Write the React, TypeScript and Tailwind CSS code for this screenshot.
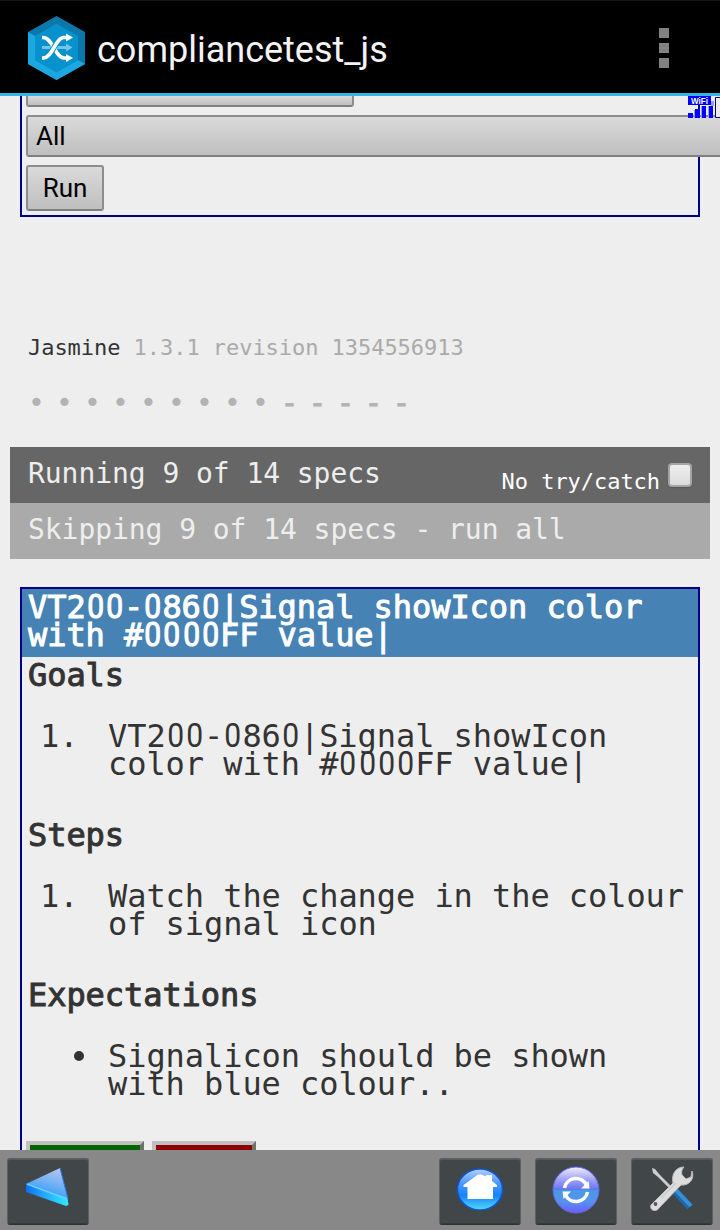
import React from "react";

function Mono({ text }: { text: string }) {
  return (
    <>
      {text.split(/(0)/).map((part, i) =>
        part === "0" ? (
          <span key={i} className="inline-block h-[28px] w-[19.2px] origin-[50%_75%] scale-x-[0.94] scale-y-[1.03] text-center font-['Roboto'] leading-[28px] tracking-normal">0</span>
        ) : (
          part
        )
      )}
    </>
  );
}

function Heading({ children }: { children: string }) {
  return (
    <h3 className="px-[6px] leading-[28px] [-webkit-text-stroke:1px_#333]">
      <Mono text={children} />
    </h3>
  );
}

function Item({ marker, lines }: { marker: string; lines: string[] }) {
  return (
    <div className="mt-[33px] mb-[43px] flex h-[56px]">
      {marker === "•" ? (
        <div className="w-[86px] pl-[52px] pt-[9px]">
          <div className="size-[10px] rounded-full bg-[#333]" />
        </div>
      ) : (
        <div className="w-[86px] pl-[18px]">{marker}</div>
      )}
      <div className="whitespace-pre">
        {lines.map((l) => (
          <div key={l} className="h-[28px]"><Mono text={l} /></div>
        ))}
      </div>
    </div>
  );
}

function Tile({ children }: { children: React.ReactNode }) {
  return (
    <button className="flex h-[67px] w-[82px] items-start justify-center rounded-[3px] border border-[#5c6062] border-b-[#2f3335] bg-[#414649] shadow-[inset_0_1px_0_#53585a,inset_0_-1px_0_#35393b]">
      {children}
    </button>
  );
}

const control = "border-2 border-[#8d8d8d] border-b-[#7f7f7f] rounded-[3px] bg-linear-to-b from-[#dadada] to-[#bfbfbf] text-black font-['Roboto']";

export default function App() {
  return (
    <div className="flex h-[1230px] w-[720px] flex-col overflow-hidden bg-[#eee] font-['Droid_Sans_Mono','DejaVu_Sans_Mono',monospace] text-[#333]">
      <header className="flex h-[96px] shrink-0 items-center border-t border-b-[3px] border-t-[#141414] border-b-[#33b5e5] bg-black pl-[28px]">
        <svg className="mt-[2px] h-[64px] w-[57px]" viewBox="0 0 57 64">
          <path d="M28.500 0 57 16v32L28.500 64 0 48V16Z" fill="#0a78aa" />
          <path d="M0 16v32l28.500 16L57 48l-7-4-21.500 12L7 44V20Z" fill="#1ba8e2" />
          <path d="M28.500 7.500 50 20v24L28.500 56.500 7 44V20Z" fill="#0791cd" />
          <path d="M14 31.500h24" stroke="#73c4e6" strokeWidth="3" />
          <path d="m38 27.500 6.500 4-6.500 4Z" fill="#73c4e6" />
          <path d="M14 21.500h1c10 0 12 20.500 21 20.500h3" fill="none" stroke="#fff" strokeWidth="3.600" />
          <path d="M14 42h1c10 0 12-20.500 21-20.500h3" fill="none" stroke="#0791cd" strokeWidth="5.500" />
          <path d="M14 42h1c10 0 12-20.500 21-20.500h3" fill="none" stroke="#fff" strokeWidth="3.600" />
          <path d="m38 17.500 7 4-7 4Zm0 20.500 7 4-7 4Z" fill="#fff" />
        </svg>
        <h1 className="ml-[12px] mt-[6px] font-['Roboto'] text-[36px] text-[#f3f3f3]">compliancetest_js</h1>
        <div className="ml-auto mr-[51px] mt-[2px] flex flex-col gap-[5px]">
          <i className="size-[10px] bg-[#828282]" />
          <i className="size-[10px] bg-[#828282]" />
          <i className="size-[10px] bg-[#828282]" />
        </div>
      </header>

      <main className="relative h-[1054px] shrink-0 overflow-hidden">
        <section className="mx-[20px] h-[121px] border-2 border-t-0 border-[#00008b] pl-[4px]">
          <div className={`${control} h-[11px] w-[328px] rounded-t-none border-t-0 from-[#c4c4c4]`} />
          <div className={`${control} relative mt-[8px] h-[42px] w-[720px] pl-[8px] text-[26px] leading-[38px]`}>All</div>
          <button className={`${control} mt-[8px] block h-[46px] w-[78px] text-[26px] leading-[42px]`}>Run</button>
        </section>
        <svg className="absolute left-[688px] top-0 h-[22px] w-[32px]" viewBox="0 0 32 22">
          <path d="M6 14h2v8H6Zm7-4h2v12h-2Zm7 0h2v12h-2Zm3-5h3v5h-3Z" fill="#99f" />
          <path d="M0 0h23v9H0ZM0 17h5v5H0Zm7-4h5v9H7Zm7-3h4v12h-4Zm7 0h4v12h-4Z" fill="#00f" />
          <path d="M27.500 1.500h7v20h-7Z" fill="#eee" stroke="#00008b" />
          <text x="3" y="7.500" fill="#fff" fontSize="9" fontWeight="bold" fontFamily="Liberation Sans" textLength="17" lengthAdjust="spacingAndGlyphs">WiFi</text>
        </svg>

        <p className="mt-[116px] ml-[28px] text-[22px] leading-[30px] tracking-[-0.045px] text-[#aaa]">
          <span className="text-[#333]">Jasmine </span>1.3.1 revision 1354556913
        </p>
        <div className="mt-[26px] ml-[28px] flex h-[28px] text-[28px] leading-[28px] text-[#b3b3b3]">
          {"•••••••••-----".split("").map((c, i) => (
            <span key={i} className={c === "-" ? "w-[28px] pl-px pt-px [-webkit-text-stroke:1.2px_#b3b3b3]" : "w-[28px]"}>{c}</span>
          ))}
        </div>

        <div className="mx-[10px] mt-[30px] flex h-[56px] bg-[#666] pl-[18px] pr-[18px] text-[28px] leading-[54px] tracking-[-0.056px] text-[#eee]">
          <span>Running 9 of 14 specs</span>
          <label className="ml-auto flex text-[22px] leading-[69px] tracking-[-0.045px] text-white">
            No try/catch
            <span className="ml-[8px] mt-[16px] size-[24px] rounded-[4px] border-2 border-[#a5a5a5] bg-linear-to-b from-[#eee] to-[#dcdcdc] shadow-[0_1px_1px_#555]" />
          </label>
        </div>
        <div className="mx-[10px] h-[56px] bg-[#aaa] pl-[18px] text-[28px] leading-[54px] tracking-[-0.056px] text-[#eee]">
          Skipping 9 of 14 specs - run all
        </div>

        <section className="mx-[20px] mt-[28px] h-[640px] border-2 border-[#00008b] text-[32px] leading-[28px] tracking-[-0.065px]">
          <h2 className="mb-[4px] h-[68px] whitespace-pre bg-[#4682b4] px-[6px] pt-[4px] text-white [-webkit-text-stroke:1px_white]">
            <div className="h-[28px]"><Mono text="VT200-0860|Signal showIcon color" /></div>
            <div className="h-[28px]"><Mono text="with #0000FF value|" /></div>
          </h2>
          <Heading>Goals</Heading>
          <Item marker="1." lines={["VT200-0860|Signal showIcon", "color with #0000FF value|"]} />
          <Heading>Steps</Heading>
          <Item marker="1." lines={["Watch the change in the colour", "of signal icon"]} />
          <Heading>Expectations</Heading>
          <Item marker="•" lines={["Signalicon should be shown", "with blue colour.."]} />
          <div className="flex gap-[8px] pl-[4px]">
            <div className="h-[40px] w-[118px] border-4 border-[#c0c0c0] border-r-[#707070] bg-[#006400]" />
            <div className="h-[40px] w-[104px] border-4 border-[#c0c0c0] border-r-[#707070] bg-[#8b0000]" />
          </div>
        </section>
      </main>

      <nav className="flex h-[80px] shrink-0 gap-[14px] bg-[#888] px-[7px] pt-[8px]">
        <Tile>
          <svg className="mt-[7px] h-[46px] w-[50px]" viewBox="0 0 50 46">
            <defs>
              <linearGradient id="arrow" x1=".8" y1="0" x2=".4" y2="1">
                <stop stopColor="#b9c6f3" /><stop offset=".55" stopColor="#69aef5" /><stop offset="1" stopColor="#1c9dfa" />
              </linearGradient>
              <linearGradient id="edge"><stop stopColor="#0872ef" /><stop offset=".45" stopColor="#27aafb" /><stop offset="1" stopColor="#2cecff" /></linearGradient>
            </defs>
            <path d="M3 18 37 2l8 31Z" fill="url(#arrow)" />
            <path d="M3 17 44.500 32l1 7-2.500 1L3 26Z" fill="url(#edge)" />
            <path d="m4 18 40 15" stroke="#71cbff" strokeWidth="1.500" />
            <path d="m37 2 8 31" stroke="#277cf0" strokeWidth="1" />
          </svg>
        </Tile>
        <div className="ml-auto flex gap-[14px]">
          <Tile>
            <svg className="mt-[7px] h-[48px] w-[50px]" viewBox="0 0 50 48">
              <defs>
                <linearGradient id="home" x2="0" y2="1"><stop stopColor="#b2d2ff" /><stop offset=".35" stopColor="#4d96ff" /><stop offset=".65" stopColor="#1683fb" /><stop offset="1" stopColor="#54dcff" /></linearGradient>
              </defs>
              <ellipse cx="25" cy="23.500" rx="22.500" ry="20.500" fill="url(#home)" stroke="#0757d5" strokeWidth="1.500" />
              <path d="M8.500 19 23 8.500h3l5 2V9h6v6l5 4v2h-4v12H12.500V21h-4Z" fill="#fff" />
            </svg>
          </Tile>
          <Tile>
            <svg className="mt-[6px] size-[50px]" viewBox="0 0 50 50">
              <defs>
                <linearGradient id="sync" x2="0" y2="1"><stop stopColor="#eeefff" /><stop offset=".25" stopColor="#a7a7f8" /><stop offset=".49" stopColor="#6575ee" /><stop offset=".5" stopColor="#459be3" /><stop offset=".75" stopColor="#5792f0" /><stop offset="1" stopColor="#6d5df5" /></linearGradient>
              </defs>
              <circle cx="25" cy="25" r="23" fill="url(#sync)" stroke="#6767ed" strokeWidth="1" />
              <path d="M13.500 23A11.700 11.700 0 0 1 35.500 20M36.500 27A11.700 11.700 0 0 1 14.500 30" fill="none" stroke="#fff" strokeWidth="3.600" />
              <path d="m37.500 16 1 7.500h-8.500ZM12.500 34l-1-7.500H20Z" fill="#fff" />
            </svg>
          </Tile>
          <Tile>
            <svg className="mt-[6px] h-[50px] w-[50px]" viewBox="0 0 50 50">
              <path d="m28 26 15 16" stroke="#1b68ad" strokeWidth="7" />
              <path d="m28 24 16 17" stroke="#398fd5" strokeWidth="4" />
              <path d="M5 3 8 4l5 6 12 12-2 2L11 12 6 8Z" fill="#ccc" />
              <path d="M37 2c-2 2-3 5-2 8l4 4 5-2 1-6c3 8-3 15-11 14L12 43c-3 5-10 2-8-3L26 18C24 9 29 2 37 2Z" fill="#ddd" stroke="#bbb" />
              <path d="M14 33 29 18" stroke="#cacaca" strokeWidth="1.500" />
              <circle cx="8.500" cy="39" r="1.900" fill="#54585a" />
            </svg>
          </Tile>
        </div>
      </nav>
    </div>
  );
}
